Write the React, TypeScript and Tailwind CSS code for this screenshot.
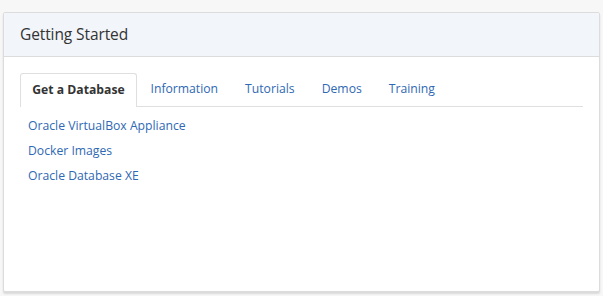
import React from 'react';

const tabs = ['Get a Database', 'Information', 'Tutorials', 'Demos', 'Training'];
const links = ['Oracle VirtualBox Appliance', 'Docker Images', 'Oracle Database XE'];

export default function App() {
  return (
    <div
      className="w-[603px] h-[296px] bg-[#f7f7f7] pt-[12px] pl-[3px] pr-[3px]"
      style={{ fontFamily: '"Open Sans", "Noto Sans", sans-serif' }}
    >
      <div className="h-[280px] bg-white border border-[#dcdcdc] rounded-[2px] shadow-[0_2px_2px_rgba(0,0,0,0.12)] flex flex-col">
        {/* Header */}
        <div className="h-[44px] bg-[#f2f5f9] border-b border-[#dcdcdc] flex items-center px-[16px] rounded-t-[2px]">
          <h2 className="text-[15.5px] text-[#333] tracking-[-0.1px]">Getting Started</h2>
        </div>

        {/* Body */}
        <div className="px-[16px] pt-[16px]">
          <div className="flex border-b border-[#dfdfdf] h-[34px]">
            {tabs.map((t, i) =>
              i === 0 ? (
                <div
                  key={t}
                  className="h-[34px] w-[117px] -mb-px bg-white border border-b-0 border-[#dfdfdf] rounded-t-[3px] flex items-center justify-center text-[12.2px] font-bold text-[#333]"
                >
                  {t}
                </div>
              ) : (
                <div key={t} className="h-[33px] px-[13.5px] flex items-center text-[12.2px] text-[#2f68b4]">
                  {t}
                </div>
              )
            )}
          </div>

          <div className="flex flex-col pt-[9px] pl-[8px] gap-[6px]">
            {links.map((l) => (
              <a key={l} href="#" className="text-[12.2px] leading-[19px] text-[#2f68b4]">
                {l}
              </a>
            ))}
          </div>
        </div>
      </div>
    </div>
  );
}
